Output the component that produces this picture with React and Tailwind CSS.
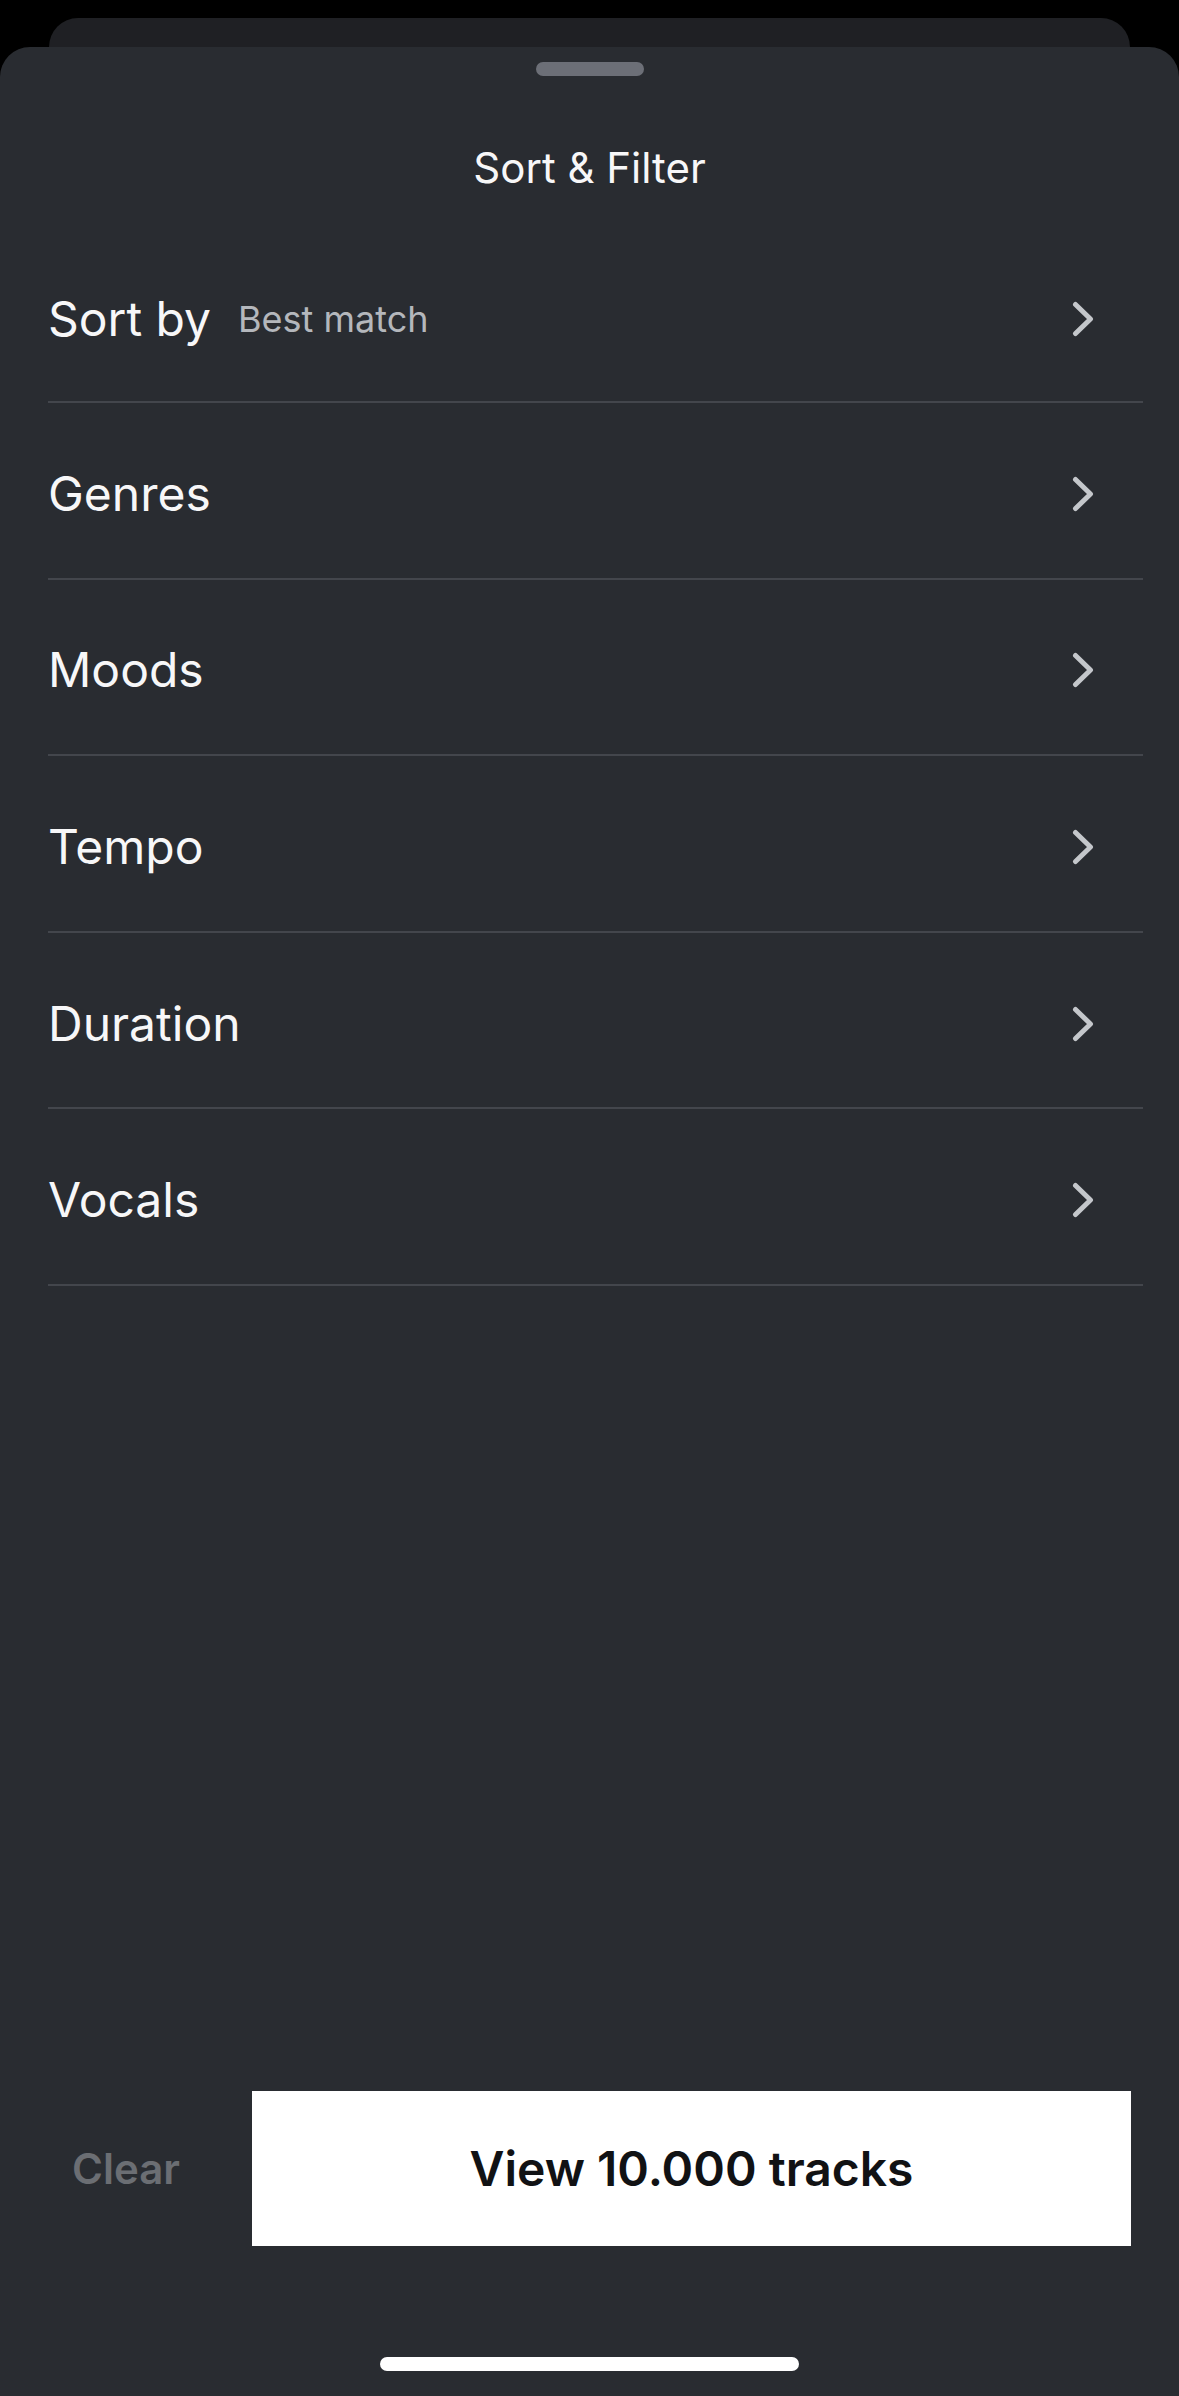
import React from "react";

function Chevron() {
  return (
    <svg width="22" height="36" viewBox="0 0 22 36" fill="none" className="shrink-0">
      <polyline points="3.5,3.5 18.5,18 3.5,32.5" stroke="#c4c7cb" strokeWidth="5" strokeLinecap="round" strokeLinejoin="round" />
    </svg>
  );
}

function Row({ label, value, first }) {
  return (
    <div className={`flex items-center justify-between border-b-2 border-[#43464c] pr-[49px] pt-[7px] ${first ? "h-[174px]" : "h-[176.6px]"}`}>
      <div className="flex items-center">
        <span className="text-[48px] leading-none text-[#f7f7f8]">{label}</span>
        {value && <span className="ml-[27px] text-[36px] leading-none text-[#b4b7bc]">{value}</span>}
      </div>
      <Chevron />
    </div>
  );
}

export default function App() {
  const rows = ["Genres", "Moods", "Tempo", "Duration", "Vocals"];
  return (
    <div className="flex h-[2396px] w-full flex-col overflow-hidden bg-black" style={{ fontFamily: "Inter, 'Noto Sans', sans-serif" }}>
      <div className="mx-[49px] mt-[18px] h-[29px] shrink-0 rounded-t-[30px] bg-[#1f2024]" />
      <div className="flex flex-1 flex-col rounded-t-[30px] bg-[#292c31]">
        <div className="mx-auto mt-[15px] h-[14px] w-[108px] rounded-full bg-[#6c6f77]" />
        <div className="mt-[67px] h-[50px] text-center text-[42px] leading-[50px] text-[#f7f7f8]">Sort &amp; Filter</div>
        <div className="ml-[48px] mr-[36px] mt-[36px]">
          <Row label="Sort by" value="Best match" first />
          {rows.map((r) => (
            <Row key={r} label={r} />
          ))}
        </div>
        <div className="flex-1" />
        <div className="flex h-[155px] items-stretch pr-[48px]">
          <button className="flex w-[252px] items-center justify-center text-[42px] font-semibold text-[#6b6e73]">Clear</button>
          <button className="flex flex-1 items-center justify-center bg-white text-[48px] font-semibold text-[#111214]">View 10.000 tracks</button>
        </div>
        <div className="mb-[25px] mt-[111px] flex justify-center">
          <div className="h-[14px] w-[419px] rounded-full bg-white" />
        </div>
      </div>
    </div>
  );
}
